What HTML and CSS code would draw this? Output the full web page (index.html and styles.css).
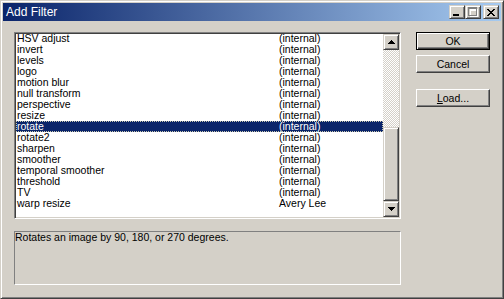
FILE: index.html
```html
<!DOCTYPE html>
<html>
<head>
<meta charset="utf-8">
<link rel="stylesheet" href="styles.css">
</head>
<body>
<div class="window">
  <div class="titlebar">
    <span class="title">Add Filter</span>
    <div class="caption">
      <span class="cbtn"><svg width="6" height="2" class="g-min"><rect width="6" height="2" fill="#000"/></svg></span>
      <span class="cbtn"><svg width="10" height="10" class="g-max"><path d="M1 1h8v1h-8zM1 2h8v1h-8zM1 3h1v6h-1zM8 3h1v6h-1zM1 8h8v1h-8z" fill="#fff" transform="translate(1,1)"/><path d="M0 0h9v2h-9zM0 2h1v7h-1zM8 2h1v7h-1zM0 8h9v1h-9z" fill="#808080"/></svg></span>
      <span class="cbtn close"><svg width="8" height="7"><path d="M0 0h2v1h-2zM6 0h2v1h-2zM1 1h2v1h-2zM5 1h2v1h-2zM2 2h4v1h-4zM3 3h2v1h-2zM2 4h4v1h-4zM1 5h2v1h-2zM5 5h2v1h-2zM0 6h2v1h-2zM6 6h2v1h-2z" fill="#000"/></svg></span>
    </div>
  </div>
  <div class="client">
    <div class="left">
      <div class="listbox">
        <div class="rows">
          <div class="row"><span>HSV adjust</span><span>(internal)</span></div>
          <div class="row"><span>invert</span><span>(internal)</span></div>
          <div class="row"><span>levels</span><span>(internal)</span></div>
          <div class="row"><span>logo</span><span>(internal)</span></div>
          <div class="row"><span>motion blur</span><span>(internal)</span></div>
          <div class="row"><span>null transform</span><span>(internal)</span></div>
          <div class="row"><span>perspective</span><span>(internal)</span></div>
          <div class="row"><span>resize</span><span>(internal)</span></div>
          <div class="row selected"><span>rotate</span><span>(internal)</span></div>
          <div class="row"><span>rotate2</span><span>(internal)</span></div>
          <div class="row"><span>sharpen</span><span>(internal)</span></div>
          <div class="row"><span>smoother</span><span>(internal)</span></div>
          <div class="row"><span>temporal smoother</span><span>(internal)</span></div>
          <div class="row"><span>threshold</span><span>(internal)</span></div>
          <div class="row"><span>TV</span><span>(internal)</span></div>
          <div class="row"><span>warp resize</span><span>Avery Lee</span></div>
        </div>
        <div class="scrollbar">
          <span class="sbtn"><svg width="7" height="4"><path d="M3 0h1v1h-1zM2 1h3v1h-3zM1 2h5v1h-5zM0 3h7v1h-7z" fill="#000"/></svg></span>
          <div class="track"></div>
          <div class="thumb"></div>
          <span class="sbtn"><svg width="7" height="4"><path d="M0 0h7v1h-7zM1 1h5v1h-5zM2 2h3v1h-3zM3 3h1v1h-1z" fill="#000"/></svg></span>
        </div>
      </div>
      <div class="desc">Rotates an image by 90, 180, or 270 degrees.</div>
    </div>
    <div class="buttons">
      <div class="btn default">OK</div>
      <div class="btn">Cancel</div>
      <div class="btn load"><span><u>L</u>oad...</span></div>
    </div>
  </div>
</div>
</body>
</html>
```

FILE: styles.css
```css
* { box-sizing: border-box; }
html, body { margin: 0; padding: 0; }
body {
  background: #d4d0c8;
  font-family: "Liberation Sans", Arial, sans-serif;
  font-size: 10.5px;
  color: #000;
}
.window {
  width: 504px;
  height: 299px;
  border: 1px solid;
  border-color: #d4d0c8 #404040 #404040 #d4d0c8;
  box-shadow: inset 1px 1px #fff, inset -1px -1px #808080;
  padding: 2px;
  background: #d4d0c8;
}
.titlebar {
  height: 18px;
  background: linear-gradient(to right, #0a246a, #a6caf0);
  display: flex;
  align-items: center;
  padding-left: 3px;
}
.title {
  color: #fff;
  font-size: 12px;
  line-height: 18px;
}
.caption {
  margin-left: auto;
  margin-right: 2px;
  display: flex;
}
.cbtn {
  width: 16px;
  height: 14px;
  background: #d4d0c8;
  border: 1px solid;
  border-color: #d4d0c8 #404040 #404040 #d4d0c8;
  box-shadow: inset 1px 1px #fff, inset -1px -1px #808080;
  display: flex;
  align-items: center;
  justify-content: center;
}
.cbtn svg { display: block; }
.g-min { margin-top: 6px; margin-right: 2px; }
.cbtn.close { margin-left: 2px; }
.client {
  display: flex;
  gap: 15px;
  padding: 11px 0 0 11px;
}
.left {
  width: 387px;
  display: flex;
  flex-direction: column;
  gap: 12px;
}
.listbox {
  height: 187px;
  display: flex;
  background: #fff;
  border: 1px solid;
  border-color: #808080 #fff #fff #808080;
  box-shadow: inset 1px 1px #404040, inset -1px -1px #d4d0c8;
  padding: 1px;
}
.rows {
  flex: 1;
  margin-top: -1px;
}
.row {
  display: grid;
  grid-template-columns: 262px 1fr;
  height: 11px;
  line-height: 11px;
  padding-left: 1px;
  white-space: nowrap;
}
.row.selected {
  background: #0a246a;
  color: #fff;
  outline: 1px dotted #c8c8b0;
  outline-offset: -1px;
}
.scrollbar {
  width: 16px;
  display: flex;
  flex-direction: column;
}
.sbtn, .thumb {
  background: #d4d0c8;
  border: 1px solid;
  border-color: #d4d0c8 #404040 #404040 #d4d0c8;
  box-shadow: inset 1px 1px #fff, inset -1px -1px #808080;
}
.sbtn {
  height: 16px;
  display: flex;
  align-items: center;
  justify-content: center;
}
.sbtn svg { display: block; }
.track {
  height: 77px;
  background: repeating-conic-gradient(#fff 0 25%, #d4d0c8 0 50%) 0 0 / 2px 2px;
}
.thumb { flex: 1; }
.desc {
  height: 54px;
  border: 1px solid;
  border-color: #808080 #fff #fff #808080;
  padding: 0 0 0 0;
  line-height: 11px;
  white-space: nowrap;
}
.buttons {
  display: flex;
  flex-direction: column;
  width: 74px;
}
.btn {
  height: 18px;
  background: #d4d0c8;
  border: 1px solid;
  border-color: #fff #404040 #404040 #fff;
  box-shadow: inset -1px -1px #808080;
  display: flex;
  align-items: center;
  justify-content: center;
  margin-top: 5px;
}
.btn.default {
  margin-top: 0;
  border-color: #000;
  box-shadow: inset 1px 1px #fff, inset -1px -1px #404040, inset -2px -2px #808080;
}
.btn.load { margin-top: 16px; }
```
